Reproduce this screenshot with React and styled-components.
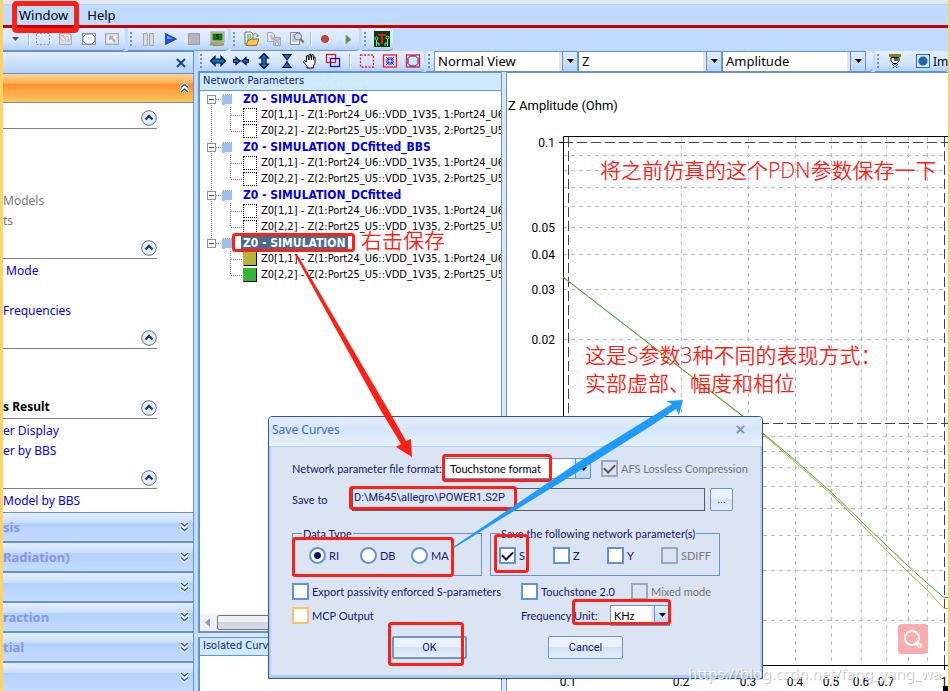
import React from 'react';
import styled, { createGlobalStyle, css } from 'styled-components';

const UI = '"Noto Sans", "Open Sans", sans-serif';
const TREE = '"DejaVu Sans Condensed", "DejaVu Sans", sans-serif';
const DIALOG = 'Lato, "Liberation Sans", sans-serif';
const FIELD = 'Roboto, "Liberation Sans", sans-serif';
const CJK = '"Noto Sans", "Noto Sans CJK SC", sans-serif';
const BLUE = '#6593cf';
const RED = '#ff2015';

const GlobalStyle = createGlobalStyle`
  * { box-sizing: border-box; }
  html, body, #root { height: 100%; margin: 0; }
  body { overflow: hidden; font-family: ${UI}; font-size: 13px; color: #000; }
  button, input, select { font: inherit; color: inherit; margin: 0; }
  button { padding: 0; border: 0; background: none; }
`;

const Frame = styled.div`
  position: relative;
  display: flex;
  flex-direction: column;
  height: 100vh;
  border-left: 3px solid #ffd263;
  border-right: 2px solid #ffd263;
  background: #bfdbff;
  overflow: hidden;
`;
const TitleEdge = styled.div`
  flex: none;
  height: 5px;
  background: #e3e8f0;
  border-bottom: 1px solid #c3d3e6;
`;
const MenuBar = styled.nav`
  display: flex;
  flex: none;
  height: 23px;
  padding-left: 16px;
  gap: 19px;
  border-bottom: 3px solid #c80000;
`;
const MenuItem = styled.button`
  font-size: 13px;
  line-height: 20px;
`;
const ToolStrip = styled.div`
  display: flex;
  flex: none;
  gap: ${(p) => (p.$tall ? 2 : 3)}px;
  height: ${(p) => (p.$tall ? 21 : 23)}px;
  overflow: hidden;
`;
const ToolGroup = styled.div`
  display: flex;
  flex: ${(p) => (p.$fill ? 1 : 'none')};
  align-items: center;
  min-width: 0;
  padding-right: ${(p) => p.$end || 0}px;
  border-bottom: 1px solid ${BLUE};
  border-radius: 0 4px 4px 0;
  background: linear-gradient(#e3efff, #d4e5fd 60%, #b4d0f8);
  overflow: hidden;
`;
const Grip = styled.span`
  flex: none;
  width: 2px;
  height: 15px;
  margin: 0 4px 0 2px;
  background: repeating-linear-gradient(${BLUE} 0 2px, transparent 2px 4px);
`;
const ToolButton = styled.button`
  display: flex;
  flex: none;
  align-items: center;
  justify-content: center;
  width: 23px;
  height: 20px;
`;
const Rule = styled.span`
  flex: none;
  width: 1px;
  height: 15px;
  margin: 0 ${(p) => (p.$wide ? 5 : 2)}px;
  background: #9dbfee;
  box-shadow: 1px 0 #fff;
`;
const Work = styled.div`
  display: grid;
  flex: 1;
  min-height: 0;
  grid-template-columns: 191px minmax(0, 1fr);
  column-gap: 4px;
`;
const Side = styled.aside`
  display: flex;
  flex-direction: column;
  min-height: 0;
  border-right: 1px solid ${BLUE};
  border-top: 1px solid ${BLUE};
  background: #fff;
  overflow: hidden;
`;
const SideTop = styled.div`
  display: flex;
  flex: none;
  align-items: center;
  justify-content: flex-end;
  height: 21px;
  padding-right: 7px;
  background: linear-gradient(#e3efff, #b5d2fb);
`;
const ActiveBar = styled.button`
  display: flex;
  flex: none;
  align-items: center;
  justify-content: flex-end;
  height: 30px;
  padding-right: 3px;
  border-top: 1px solid ${BLUE};
  border-bottom: 1px solid ${BLUE};
  background: linear-gradient(#ffd39c, #ffb354 32%, #ff8f33 36%, #ffc65a);
`;
const Sections = styled.div`
  flex: none;
  padding: 4px 0 1px;
`;
const SectionHead = styled.div`
  display: flex;
  align-items: flex-end;
  justify-content: space-between;
  width: 154px;
  height: 22px;
  padding-bottom: 2px;
  border-bottom: 1px solid #808080;
  font-size: 12px;
  line-height: 18px;
  font-weight: 700;
  white-space: nowrap;
`;
const RoundButton = styled.button`
  display: flex;
`;
const SectionList = styled.div`
  padding: 2px 0 ${(p) => (p.$last ? 0 : 6)}px;
`;
const SideLink = styled.a`
  display: block;
  height: 20px;
  font-size: 12px;
  line-height: 20px;
  white-space: pre;
  text-decoration: none;
  color: ${(p) => (p.$muted ? '#777' : '#0000f0')};
`;
const SideBar = styled.button`
  display: flex;
  flex: none;
  align-items: center;
  justify-content: space-between;
  height: 30px;
  padding-right: 3px;
  border-top: 1px solid ${BLUE};
  border-bottom: 1px solid ${BLUE};
  background: linear-gradient(#e3efff, #c9dffe 34%, #b1d1ff 36%, #c5dcff);
  color: #8a97dc;
  font-size: 13px;
  font-weight: 700;
  white-space: nowrap;
`;
const Main = styled.main`
  display: flex;
  flex-direction: column;
  min-width: 0;
  min-height: 0;
`;
const Panes = styled.div`
  display: grid;
  flex: 1;
  min-height: 0;
  grid-template-columns: 304px minmax(0, 1fr);
  column-gap: 4px;
  background: #dbe5f6;
`;
const ListColumn = styled.div`
  display: grid;
  min-height: 0;
  grid-template-rows: minmax(0, 1fr) 54px;
  row-gap: 4px;
`;
const ListPane = styled.section`
  display: flex;
  flex-direction: column;
  min-height: 0;
  border: 1px solid ${BLUE};
  border-left-width: 2px;
  border-bottom-width: ${(p) => (p.$open ? 0 : 2)}px;
  background: #fff;
  overflow: hidden;
`;
const PaneTitle = styled.h2`
  flex: none;
  height: 18px;
  margin: 0;
  padding-left: 3px;
  border-bottom: 1px solid ${BLUE};
  background: #cdeaff;
  color: #15246c;
  font: 400 11px/15px ${TREE};
`;
const Tree = styled.div`
  flex: 1;
  min-height: 0;
  overflow: hidden;
`;
const TreeRow = styled.div`
  display: flex;
  align-items: center;
  height: 16px;
  padding-left: 5px;
  font: 400 11px/16px ${TREE};
  white-space: nowrap;

  > svg { flex: none; }
`;
const NodeName = styled.span`
  padding: 0 2px;
  font-size: 12px;
  line-height: 14px;
  font-weight: 700;
  color: ${(p) => (p.$selected ? '#fff' : '#0000f0')};
  background: ${(p) => (p.$selected ? '#4f6b8c' : 'transparent')};
`;
const Swatch = styled.span`
  flex: none;
  width: 14px;
  height: 14px;
  margin-right: 4px;
  border: 1px dotted #000;
  ${(p) =>
    p.$color &&
    css`
      border: 1px solid #fff;
      border-color: ${p.$color} #000 #000 ${p.$color};
      background: ${p.$color};
    `}
`;
const ScrollBar = styled.div`
  display: flex;
  flex: none;
  align-items: center;
  gap: 6px;
  height: 17px;
  padding-left: 5px;
  background: #f0f0f3;
`;
const Thumb = styled.span`
  flex: none;
  width: 210px;
  height: 15px;
  border: 1px solid #6d7686;
  border-radius: 2px;
  background: linear-gradient(#eef0f4 45%, #ccd4e0 50%, #d6dce6);
`;
const PlotPane = styled.section`
  min-width: 0;
  border-left: 1px solid ${BLUE};
  border-top: 1px solid ${BLUE};
  background: #fff;
  overflow: hidden;
`;
const Plot = styled.svg`
  display: block;
  width: 100%;
  height: 100%;
  font: 12px ${FIELD};
`;

const ComboBox = styled.span`
  display: grid;
  flex: none;
  grid-template-columns: minmax(0, 1fr) 15px;
  width: ${(p) => p.$w}px;
  height: ${(p) => p.$h || 20}px;
  border: 1px solid ${BLUE};
  background: #fff;
`;
const ComboSelect = styled.select`
  appearance: none;
  grid-area: 1 / 1 / 2 / 3;
  min-width: 0;
  padding: 0 18px 0 ${(p) => p.$pad || 3}px;
  border: 0;
  outline: 0;
  background: #fff;
  color: #000;
`;
const ComboArrow = styled.span`
  grid-area: 1 / 2 / 2 / 3;
  display: flex;
  align-items: center;
  justify-content: center;
  border-left: 1px solid ${BLUE};
  box-shadow: -3px 0 #e4e4e4;
  background: linear-gradient(#e3efff, #b8d3fa);
  pointer-events: none;
`;
const ViewOption = styled.label`
  display: flex;
  align-items: center;
  gap: 3px;
  margin-left: 10px;
  white-space: nowrap;
  font-size: 12px;
`;
const OptionRadio = styled.input`
  appearance: none;
  flex: none;
  width: 14px;
  height: 14px;
  border: 1px solid #2a6cb8;
  background: radial-gradient(circle, #2067b0 0 4px, #d5e8ff 5px);
`;

/* Save dialog */
const Dialog = styled.form`
  position: absolute;
  left: 265px;
  top: 416px;
  display: flex;
  flex-direction: column;
  width: 495px;
  border: 1px solid #33557f;
  border-radius: 4px 4px 0 0;
  background: #dbe4f2;
  box-shadow: inset 2px 0 #b5cff2, inset -2px 0 #b5cff2, inset 0 -3px #a9c8f2;
  color: #15186b;
  font-family: ${DIALOG};
  font-size: 11px;
`;
const DialogHead = styled.header`
  display: flex;
  align-items: center;
  justify-content: space-between;
  height: 30px;
  padding: 0 17px 4px 3px;
  border-bottom: 1px solid #aed4ee;
  border-radius: 3px 3px 0 0;
  background: linear-gradient(#e2ecfa, #d5e6fa 45%, #e3f1fc);
  color: #426ab3;
  font: 400 12px/20px ${UI};
`;
const DialogBody = styled.div`
  display: flex;
  flex-direction: column;
  padding: 11px 28px 19px 23px;
`;
const FormRow = styled.div`
  display: flex;
  align-items: center;
  height: ${(p) => p.$h || 24}px;
  margin-top: ${(p) => p.$top || 0}px;
`;
const FieldLabel = styled.label`
  flex: none;
  width: ${(p) => (p.$w ? `${p.$w}px` : 'auto')};
  white-space: nowrap;
`;
const PathInput = styled.input`
  flex: none;
  width: 353px;
  height: 23px;
  margin-right: 5px;
  padding: 0 1px 4px;
  border: 1px solid #555c66;
  background: transparent;
  font-family: ${FIELD};
`;
const PushButton = styled.button`
  flex: none;
  width: ${(p) => p.$w}px;
  height: 23px;
  border: ${(p) => (p.$primary ? 2 : 1)}px solid #7593bb;
  border-radius: 2px;
  background: linear-gradient(#eaf2fe 45%, #d3e2f6 50%, #e3edfb);
  font-family: ${FIELD};
`;
const Groups = styled.div`
  display: flex;
  gap: 8px;
  margin-top: 15px;
`;
const Group = styled.fieldset`
  display: flex;
  width: ${(p) => p.$w}px;
  height: 50px;
  margin: 0;
  padding: 6px 0 0 ${(p) => p.$pad}px;
  border: 1px solid ${BLUE};
  min-width: 0;
`;
const Legend = styled.legend`
  margin-left: ${(p) => p.$shift}px;
  padding: 0 1px;
  line-height: 15px;
`;
const Check = styled.label`
  display: flex;
  align-items: center;
  flex: none;
  gap: 3px;
  width: ${(p) => (p.$w ? `${p.$w}px` : 'auto')};
  height: 17px;
  white-space: nowrap;
  color: ${(p) => (p.$off ? '#74777c' : 'inherit')};
`;
const CheckInput = styled.input`
  appearance: none;
  flex: none;
  width: 17px;
  height: 17px;
  border: 2px solid ${(p) => p.$edge || BLUE};
  background: ${(p) => (p.disabled ? '#dbe4f2' : '#fff')};
  ${(p) => p.type === 'radio' && 'border-radius: 50%;'}
  ${(p) =>
    p.type === 'radio' &&
    css`
      &:checked {
        background: radial-gradient(circle, #0a1060 0 3px, #fff 4px);
      }
    `}
  ${(p) =>
    p.type === 'checkbox' &&
    css`
      display: grid;
      place-items: center;
      &:checked::before {
        content: '';
        width: 9px;
        height: 5px;
        margin-bottom: 3px;
        border: solid ${p.disabled ? '#555' : '#0a1060'};
        border-width: 0 0 2px 2px;
        rotate: -45deg;
      }
    `}
`;
const Spacer = styled.span`
  flex: none;
  width: 10px;
`;
const Actions = styled.div`
  display: flex;
  gap: 81px;
  margin-top: 9px;
  padding-left: 100px;
`;

/* Notes drawn over the window */
const Notes = styled.svg`
  position: absolute;
  inset: 0 auto auto -3px;
  width: 950px;
  height: 691px;
  pointer-events: none;
`;
const Note = styled.p`
  position: absolute;
  left: ${(p) => p.$x}px;
  top: ${(p) => p.$y}px;
  margin: 0;
  color: ${RED};
  font: 350 21px/28px ${CJK};
  white-space: nowrap;
`;
const SearchButton = styled.button`
  position: absolute;
  right: 20px;
  bottom: 37px;
  display: flex;
  align-items: center;
  justify-content: center;
  width: 30px;
  height: 30px;
  border-radius: 4px;
  background: #f9adaf;
`;
const Watermark = styled.span`
  position: absolute;
  right: 7px;
  bottom: 7px;
  font-size: 15px;
  line-height: 22px;
  color: rgba(255, 255, 255, 0.85);
  text-shadow: 1px 1px 1px rgba(120, 120, 130, 0.5);
  white-space: nowrap;
`;

const Icon = ({ children, size = 16 }) => (
  <svg width={size} height={size} viewBox="0 0 16 16" fill="none" aria-hidden="true">
    {children}
  </svg>
);

const TEAL = '#008080';
const arrowProps = { fill: TEAL, stroke: '#000080', strokeWidth: 1.2, strokeLinejoin: 'miter' };

const icons = {
  more: <path d="M5 6h7l-3.500 4z" fill="#555" />,
  region: <rect x="1.500" y="2.500" width="13" height="11" stroke="#909aa8" strokeDasharray="2 1.500" />,
  undo: (
    <>
      <path d="M1.500 2.500h10l2 2v9h-12z" fill="#d8dadf" stroke="#a9adb5" />
      <path d="M5 5l3 1c3-2 4 2 1 5 5-2 5-8 0-8L7 2zM3 4v5h5z" fill="#f4f5f7" stroke="#999" strokeWidth=".5" />
    </>
  ),
  circle: (
    <>
      <rect x="1.500" y="2.500" width="13" height="11" stroke="#8f96a2" fill="#e8ebef" />
      <path d="M5 3h6l3 3v4l-3 3H5l-3-3V6z" stroke="#7e8795" fill="#f6f8fa" />
    </>
  ),
  expand: (
    <>
      <rect x="1.500" y="2.500" width="13" height="11" stroke="#a4a8b0" fill="#d4d7dc" />
      <rect x="3.500" y="4.500" width="9" height="7" fill="#f2f3f5" />
      <path d="M5 5h5L8.500 6.500 12 10l-1.500 1.500L7 8 5 10z" fill="#a9adb5" />
    </>
  ),
  pause: (
    <g fill="#d8dade" stroke="#a6a9ae">
      <rect x="3.500" y="2.500" width="4" height="12" />
      <rect x="9.500" y="2.500" width="4" height="12" />
    </g>
  ),
  play: (
    <>
      <path d="M2.500 2.500v11L13.500 8z" fill="#2450d8" stroke="#1c48b8" />
      <path d="M4 4.500v3.500L10 8z" fill="#6a9cff" />
    </>
  ),
  stop: <rect x="2.500" y="2.500" width="11" height="11" fill="#b4b6ba" stroke="#9a9da3" />,
  computer: (
    <>
      <rect x="2" y="1" width="13" height="10" fill="#d6d3bf" stroke="#9b9878" />
      <rect x="3.500" y="2.500" width="10" height="7" fill="#0b7a10" />
      <path d="M10 3.500H7.500v2h2v2H7" stroke="#002c00" />
      <path d="M2 12h12l1 2H1zM4 14.500h9" fill="#c0b978" stroke="#817b42" strokeWidth=".7" />
    </>
  ),
  open: (
    <>
      <path d="M2 1h6l2 2v10H2z" fill="#f5fff5" stroke="#4f7f57" />
      <path d="M4 4h4M4 6h4M4 8h3" stroke="#30935a" />
      <path d="M3 14.500L5 9h2l1-1h8l-2.500 6.500z" fill="#f7c24e" stroke="#9a6a12" />
      <path d="M10.500 3.500c2-2 4-1 4 2M13 4.500l1.500 1.500 1-2" stroke="#5f7d9c" />
    </>
  ),
  saveAll: (
    <g stroke="#a3a9b1" fill="#e7eaee">
      <path d="M1.500 1.500h5l2 2v7h-7z" />
      <path d="M3 5h3v3M4.500 7L6 8.500 7.500 7" />
      <path d="M7.500 6.500h7v8h-7z" fill="#bfc5cc" />
      <path d="M9 7h4v2H9zM9.500 11.500h3v3h-3z" fill="#f2f4f6" />
    </g>
  ),
  preview: (
    <>
      <path d="M1.500 1.500h9v12h-9z" fill="#f4f7fa" stroke="#7b8794" />
      <path d="M3 4h3M3 6h3M3 8h4M3 10h5" stroke="#8796a5" />
      <circle cx="9" cy="5.500" r="3.500" fill="#c4defa" stroke="#6a7f96" />
      <path d="M11.500 8l3 3.500" stroke="#a3622b" strokeWidth="2" />
    </>
  ),
  record: <circle cx="8" cy="8" r="3.500" fill="#d34632" stroke="#a83a2c" />,
  step: <path d="M6 4v9l5-4.500z" fill="#4f8e45" stroke="#87a37f" />,
  board: (
    <>
      <rect width="16" height="16" fill="#003d12" />
      <path d="M4 4h8M8 4v9" stroke="#f01818" strokeWidth="2" />
      <path d="M2.500 15V9M13.500 15V8M5 15v-3H2.500M11 15v-3h2.500" stroke="#8ce08c" />
      <circle cx="2.500" cy="7.500" r="1.500" stroke="#8ce08c" />
      <circle cx="13.500" cy="6.500" r="1.500" stroke="#8ce08c" />
    </>
  ),
  wide: <path d="M.5 8L5 3.500V6h6V3.500L15.500 8 11 12.500V10H5v2.500z" {...arrowProps} />,
  narrow: <path d="M.5 6.500h2.500v-2L7 8l-4 3.500v-2H.5zM15.500 6.500H13v-2L9 8l4 3.500v-2h2.500zM7 8h2" {...arrowProps} />,
  tall: <path d="M8 .5L12.500 5H10v6h2.500L8 15.500 3.500 11H6V5H3.500z" {...arrowProps} />,
  short: <path d="M4 1.500h8L9.500 5 8 7 6.500 5zM4 14.500h8L9.500 11 8 9l-1.500 2zM8 6v4" {...arrowProps} />,
  hand: (
    <path
      d="M5 15v-2L1.500 9l1-1.500L4.500 9V3L6 2.500 7 7V1.500L8.500 1 9.500 7V2L11 1.500l.5 5.500V4L13 4v6l-1.500 3v2z"
      fill="#fff"
      stroke="#000"
    />
  ),
  overlap: (
    <>
      <rect x="1.500" y="1.500" width="9" height="8" stroke="#e01515" strokeWidth="1.300" />
      <rect x="5.500" y="5.500" width="9" height="8" stroke="#1010d8" strokeWidth="1.300" />
    </>
  ),
  select: <rect x="1.500" y="2" width="13" height="12" stroke="#ff1818" strokeDasharray="2 1.500" strokeWidth="1.300" />,
  fit: (
    <>
      <rect x="1.500" y="2" width="13" height="12" stroke="#ff1818" strokeWidth="1.300" />
      <path
        d="M4 4l3 3M12 4L9 7M4 12l3-3M12 12L9 9M4 7h3V4M12 7H9V4M4 9h3v3M12 9H9v3"
        stroke="#1010d8"
      />
    </>
  ),
  fitRound: (
    <>
      <rect x="1.500" y="2" width="13" height="12" stroke="#ff1818" strokeWidth="1.300" />
      <path d="M5.500 3h5L13 5.500v5L10.500 13h-5L3 10.500v-5z" stroke="#1515c8" />
    </>
  ),
  brush: (
    <>
      <path d="M2 2.500h12" stroke="#8a8600" strokeWidth="3" />
      <path d="M4 4.500h8v3l-2 3H6l-2-3z" fill="#fff" stroke="#000" />
      <rect x="7" y="5" width="4" height="3" fill="#15821c" />
      <path d="M5 11l2 2-1 2M8 11v4M11 11l-2 2 1 2" stroke="#333" strokeDasharray="1 1" />
    </>
  ),
};

const Tool = ({ name }) => (
  <ToolButton type="button" aria-label={name}>
    <Icon>{icons[name]}</Icon>
  </ToolButton>
);

const DownMark = () => (
  <svg width="7" height="4" viewBox="0 0 7 4" aria-hidden="true">
    <path d="M0 0h7L3.500 4z" fill="#000" />
  </svg>
);
const Combo = ({ value, label, id, w, h, pad }) => (
  <ComboBox $w={w} $h={h}>
    <ComboSelect id={id} aria-label={label} defaultValue={value} $pad={pad}>
      <option>{value}</option>
    </ComboSelect>
    <ComboArrow>
      <DownMark />
    </ComboArrow>
  </ComboBox>
);

const Cross = ({ color, size = 10 }) => (
  <svg width={size} height={size} viewBox="0 0 10 10" aria-hidden="true">
    <path d="M1 1l8 8M9 1L1 9" stroke={color} strokeWidth="2" />
  </svg>
);
const RoundUp = () => (
  <svg width="16" height="16" viewBox="0 0 16 16" fill="none" aria-hidden="true">
    <circle cx="8" cy="8" r="7.300" fill="#e6eff8" stroke="#5b7086" />
    <path d="M4.500 9.500L8 6l3.500 3.500" stroke="#1c3c6e" strokeWidth="2.400" />
  </svg>
);
const Chevrons = ({ up }) => {
  const d = up ? 'M2 5.500l3.500-3 3.500 3M2 10l3.500-3L9 10' : 'M2 2l3.500 3L9 2M2 6.500l3.500 3 3.500-3';
  return (
    <svg width="11" height="12" viewBox="0 0 11 12" fill="none" aria-hidden="true">
      <path d={d} stroke="#fff" strokeWidth="3.500" />
      <path d={d} stroke="#315f9f" strokeWidth="1.500" />
    </svg>
  );
};

const sections = [
  { title: '', items: ['', '', '', 'Models', 'ts'], muted: true },
  { title: '', items: [' Mode', '', 'Frequencies'] },
  { title: '', items: ['', ''] },
  { title: 's Result', items: ['er Display', 'er by BBS'] },
  { title: '', items: ['Model by BBS'] },
];
const bars = ['sis', 'Radiation)', '', 'raction', 'tial', ''];

const curves = [
  'Z0[1,1] - Z(1:Port24_U6::VDD_1V35, 1:Port24_U6',
  'Z0[2,2] - Z(2:Port25_U5::VDD_1V35, 2:Port25_U5',
];
const nodes = [
  { name: 'Z0 - SIMULATION_DC' },
  { name: 'Z0 - SIMULATION_DCfitted_BBS' },
  { name: 'Z0 - SIMULATION_DCfitted' },
  { name: 'Z0 - SIMULATION', selected: true, colors: ['#b5b536', '#35b535'] },
];

const dots = { stroke: '#808080', strokeDasharray: '1 1' };
const NodeGuide = ({ first, last }) => (
  <svg width="36" height="16" viewBox="0 0 36 16" fill="none" aria-hidden="true">
    {!first && <path d="M6.500 0v4" {...dots} />}
    {!last && <path d="M6.500 12v4" {...dots} />}
    <path d="M11 8.500h6" {...dots} />
    <rect x="2.500" y="4.500" width="8" height="8" fill="#fff" stroke="#8a949e" />
    <path d="M4 8.500h5" stroke="#2b4c9c" />
    <path d="M17 4h10v9h-7v1h-3z" fill="#9fc0ee" />
    <path d="M18 3.500h9" stroke="#7b9cc8" strokeDasharray="1 1" />
  </svg>
);
const LeafGuide = ({ line, last }) => (
  <svg width="38" height="16" viewBox="0 0 38 16" aria-hidden="true">
    {line && <path d="M6.500 0v16" {...dots} />}
    <path d={last ? 'M25.500 0v8' : 'M25.500 0v16'} {...dots} />
    <path d="M26 8.500h11" {...dots} />
  </svg>
);

const minorX = [174, 241, 288, 324, 354, 379, 401, 420];
const minorY = [82, 97, 114, 133, 154, 181, 216, 266, 363, 378, 394, 413, 435, 462, 497, 547];
const yTicks = [['0.1', 69], ['0.05', 154], ['0.04', 181], ['0.03', 216], ['0.02', 266]];
const xTicks = [['0.1', 61], ['0.2', 174], ['0.3', 241], ['0.4', 288], ['0.5', 324], ['0.6', 354], ['0.7', 379], ['1', 437]];

const Chart = () => (
  <Plot role="img" aria-label="Z Amplitude (Ohm)" fill="none">
    <text x="1" y="37" fill="#000" fontSize="13">Z Amplitude (Ohm)</text>
    <g stroke="#bcbcbc" strokeDasharray="4 4">
      {minorX.map((x) => <path key={x} d={`M${x}.500 64V592`} />)}
      {minorY.map((y) => <path key={y} d={`M56 ${y}.500H437`} />)}
    </g>
    <g stroke="#444" strokeDasharray="10 4">
      <path d="M61.500 64V592M437.500 64V592M56 69.500H441M56 350.500H441" />
    </g>
    <path d="M441 63.500H56.500V592.500H441M52 69.500h4M437.500 592v5" stroke="#000" />
    <path d="M56 204L234 342 257 362 289 390 324.500 421.500 354 451 379 477 401 499 420 517 437 535.500h4" stroke="#b5a82c" />
    <path d="M56 204L234 341.500 257 361 289 388 324.500 419.500 354 448 379 472 401 493 420 510 437 524.500h4" stroke="#33b240" />
    <g fill="#000">
      {yTicks.map(([t, y]) => <text key={t} x="48" y={y + 5} textAnchor="end">{t}</text>)}
      {xTicks.map(([t, x]) => <text key={t} x={x} y="613" textAnchor="middle">{t}</text>)}
    </g>
  </Plot>
);

const boxes = [
  [14.5, 3.5, 62, 27, 5],
  [233.5, 234.5, 120, 16, 3],
  [443.5, 455.5, 107, 25, 3],
  [350.5, 487.5, 165, 21, 3],
  [293.5, 538.5, 159, 37, 3],
  [495.5, 535.5, 32, 36, 3],
  [573.5, 600.5, 96, 23, 3],
  [389.5, 623.5, 73, 41, 3],
];

const Toggle = ({ children, w, off, edge, ...rest }) => (
  <Check $w={w} $off={off}>
    <CheckInput {...rest} disabled={off} $edge={off ? '#9aa8ba' : edge} />
    {children}
  </Check>
);

const SaveDialog = () => (
  <Dialog role="dialog" aria-label="Save Curves" onSubmit={(e) => e.preventDefault()}>
    <DialogHead>
      Save Curves
      <button type="button" aria-label="Close"><Cross color="#7f93b5" size={9} /></button>
    </DialogHead>
    <DialogBody>
      <FormRow $h={21}>
        <FieldLabel htmlFor="format" $w={152}>Network parameter file format:</FieldLabel>
        <Combo id="format" value="Touchstone format" w={147} h={21} pad={5} />
        <Spacer />
        <Toggle type="checkbox" off defaultChecked>AFS Lossless Compression</Toggle>
      </FormRow>
      <FormRow $h={23} $top={9}>
        <FieldLabel htmlFor="path" $w={60}>Save to</FieldLabel>
        <PathInput id="path" defaultValue="D:\M645\allegro\POWER1.S2P" />
        <PushButton type="button" $w={23}>...</PushButton>
      </FormRow>
      <Groups>
        <Group $w={190} $pad={16}>
          <Legend $shift={-7}>Data Type</Legend>
          <Toggle type="radio" name="data" w={51} defaultChecked>RI</Toggle>
          <Toggle type="radio" name="data" w={51}>DB</Toggle>
          <Toggle type="radio" name="data">MA</Toggle>
        </Group>
        <Group $w={230} $pad={8}>
          <Legend $shift={1}>Save the following network parameter(s)</Legend>
          <Toggle type="checkbox" w={54} defaultChecked>S</Toggle>
          <Toggle type="checkbox" w={54}>Z</Toggle>
          <Toggle type="checkbox" w={54}>Y</Toggle>
          <Toggle type="checkbox" off>SDIFF</Toggle>
        </Group>
      </Groups>
      <FormRow $top={3}>
        <Toggle type="checkbox" w={229}>Export passivity enforced S-parameters</Toggle>
        <Toggle type="checkbox" w={110}>Touchstone 2.0</Toggle>
        <Toggle type="checkbox" off>Mixed mode</Toggle>
      </FormRow>
      <FormRow>
        <Toggle type="checkbox" w={229} edge="#ffc06a">MCP Output</Toggle>
        <FieldLabel htmlFor="unit" $w={89}>Frequency Unit:</FieldLabel>
        <Combo id="unit" value="KHz" w={60} h={21} />
      </FormRow>
      <Actions>
        <PushButton type="submit" $w={75} $primary>OK</PushButton>
        <PushButton type="button" $w={75}>Cancel</PushButton>
      </Actions>
    </DialogBody>
  </Dialog>
);

export default function App() {
  return (
    <Frame>
      <GlobalStyle />
      <TitleEdge />
      <MenuBar>
        <MenuItem type="button">Window</MenuItem>
        <MenuItem type="button">Help</MenuItem>
      </MenuBar>
      <ToolStrip>
        <ToolGroup $end={2}>
          <Tool name="more" />
          <Rule />
          {['region', 'undo', 'circle', 'expand'].map((n) => <Tool key={n} name={n} />)}
        </ToolGroup>
        <ToolGroup>
          <Grip />
          {['pause', 'play', 'stop', 'computer'].map((n) => <Tool key={n} name={n} />)}
        </ToolGroup>
        <ToolGroup>
          <Grip />
          {['open', 'saveAll', 'preview'].map((n) => <Tool key={n} name={n} />)}
          <Rule />
          {['record', 'step'].map((n) => <Tool key={n} name={n} />)}
        </ToolGroup>
        <ToolGroup>
          <Grip />
          <Tool name="board" />
        </ToolGroup>
      </ToolStrip>
      <Work>
        <Side>
          <SideTop>
            <button type="button" aria-label="Close panel"><Cross color="#1d4484" /></button>
          </SideTop>
          <ActiveBar type="button" aria-label="Collapse"><Chevrons up /></ActiveBar>
          <Sections>
            {sections.map((s, i) => (
              <React.Fragment key={i}>
                <SectionHead>
                  <span>{s.title}</span>
                  <RoundButton type="button" aria-label="Collapse section"><RoundUp /></RoundButton>
                </SectionHead>
                <SectionList $last={i === sections.length - 1}>
                  {s.items.map((t, k) => <SideLink key={k} href="#" $muted={s.muted}>{t}</SideLink>)}
                </SectionList>
              </React.Fragment>
            ))}
          </Sections>
          {bars.map((b, i) => (
            <SideBar key={i} type="button"><span>{b}</span><Chevrons /></SideBar>
          ))}
        </Side>
        <Main>
          <ToolStrip $tall>
            <ToolGroup>
              <Grip />
              {['wide', 'narrow', 'tall', 'short', 'hand', 'overlap'].map((n) => <Tool key={n} name={n} />)}
              <Rule $wide />
              {['select', 'fit', 'fitRound'].map((n) => <Tool key={n} name={n} />)}
            </ToolGroup>
            <ToolGroup $end={7}>
              <Grip />
              <Combo label="View" value="Normal View" w={144} h={21} />
              <Combo label="Parameter" value="Z" w={144} h={21} />
              <Combo label="Quantity" value="Amplitude" w={144} h={21} />
            </ToolGroup>
            <ToolGroup $fill>
              <Grip />
              <Tool name="brush" />
              <ViewOption><OptionRadio type="radio" defaultChecked />Im</ViewOption>
            </ToolGroup>
          </ToolStrip>
          <Panes>
            <ListColumn>
              <ListPane>
                <PaneTitle>Network Parameters</PaneTitle>
                <Tree>
                  {nodes.map((n, i) => (
                    <React.Fragment key={n.name}>
                      <TreeRow>
                        <NodeGuide first={i === 0} last={i === nodes.length - 1} />
                        <NodeName $selected={n.selected}>{n.name}</NodeName>
                      </TreeRow>
                      {curves.map((c, k) => (
                        <TreeRow key={c}>
                          <LeafGuide line={i < nodes.length - 1} last={k === 1} />
                          <Swatch $color={n.colors && n.colors[k]} />
                          {c}
                        </TreeRow>
                      ))}
                    </React.Fragment>
                  ))}
                </Tree>
                <ScrollBar>
                  <svg width="6" height="9" viewBox="0 0 6 9" aria-hidden="true">
                    <path d="M5 0v9L0 4.500z" fill="#8d9cc4" />
                  </svg>
                  <Thumb />
                </ScrollBar>
              </ListPane>
              <ListPane $open>
                <PaneTitle>Isolated Curves</PaneTitle>
              </ListPane>
            </ListColumn>
            <PlotPane><Chart /></PlotPane>
          </Panes>
        </Main>
      </Work>
      <SaveDialog />
      <SearchButton type="button" aria-label="Search">
        <svg width="20" height="20" viewBox="0 0 20 20" fill="none" stroke="#fff" aria-hidden="true">
          <circle cx="9" cy="9" r="7" strokeWidth="2" />
          <path d="M14 14l3 3" strokeWidth="4" strokeLinecap="round" />
          <path d="M14.500 14.500l2.500 2.500" stroke="#f9adaf" strokeWidth="1" />
        </svg>
      </SearchButton>
      <Watermark>https://blog.csdn.net/fang_yang_wa</Watermark>
      <Notes viewBox="0 0 950 691" fill="none" aria-hidden="true">
        <path d="M943 686h7v5h-7z" fill="#000" />
        {boxes.map(([x, y, w, h, s]) => (
          <rect key={`${x}-${y}`} x={x} y={y} width={w} height={h} rx="2" stroke={RED} strokeWidth={s} />
        ))}
        <path d="M295 255l2-1 92 157 17 30 5-2 1 18-16-10 5-3-20-33z" fill={RED} />
        <path d="M454 548l-1-1L580 461l92-57-6-3 17-1-4 15-3-6-22 15-70 44z" fill="#1e9bff" />
      </Notes>
      <Note $x={597} $y={156}>将之前仿真的这个PDN参数保存一下</Note>
      <Note $x={358} $y={226}>右击保存</Note>
      <Note $x={582} $y={341}>
        这是S参数3种不同的表现方式：
        <br />
        实部虚部、幅度和相位
      </Note>
    </Frame>
  );
}
